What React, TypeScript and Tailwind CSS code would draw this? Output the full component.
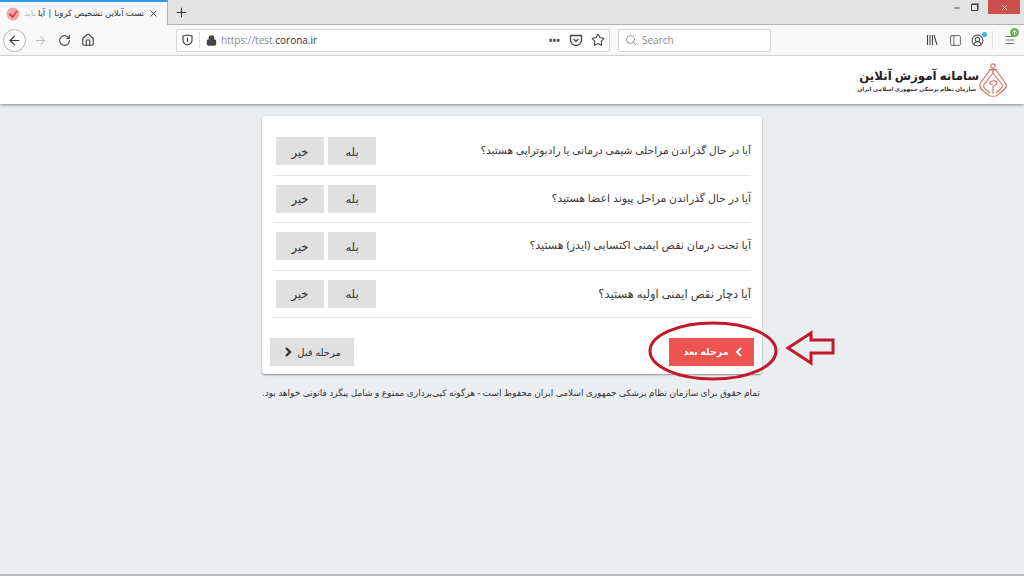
import React from 'react';
import { ArrowLeft, ArrowRight, RotateCw, Home, Lock, Star, Search, Plus, X, Minus, PanelLeft, CircleUserRound, Menu, ArrowUp } from 'lucide-react';

const questions = [
  { text: 'آیا در حال گذراندن مراحلی شیمی درمانی یا رادیوتراپی هستید؟', size: 'text-[10.6px]' },
  { text: 'آیا در حال گذراندن مراحل پیوند اعضا هستید؟', size: 'text-[10.9px]' },
  { text: 'آیا تحت درمان نقص ایمنی اکتسابی (ایدز) هستید؟', size: 'text-[11.1px]' },
  { text: 'آیا دچار نقص ایمنی اولیه هستید؟', size: 'text-[11.5px]' },
];

const Logo = () => (
  <svg width="28" height="34" viewBox="0 0 28 34" fill="none" stroke="#d4786a" strokeWidth="1.2">
    <path d="M11 7 L1.5 20 C0 23 1.5 26 4.5 28 L10 32.5 C12 33.5 16 33.5 18 32.5 L23.5 28 C26.5 26 28 23 26.5 20 L17 7 Z" />
    <path d="M14 10 L5 21.5 C4 23.5 5 25 7 26.5 L11 30 M14 10 L23 21.5 C24 23.5 23 25 21 26.5 L17 30" />
    <circle cx="14" cy="3" r="2.2" />
    <path d="M10 6.5 H18 M14 5 V10 M14 31 V24 C14 22 18 23 18 20 C18 17.5 13 17 11 19.5 C10 21 13 21.5 14 21" />
  </svg>
);

const Question = ({ text, size }: { text: string; size: string }) => (
  <div className="flex items-center justify-between border-b border-[#e4e4e4] h-[47.5px] pl-[3px]">
    <p className={`${size} text-[#3a3a3a] -mt-[1px]`}>{text}</p>
    <div className="flex gap-[4px]">
      <button className="w-[48px] h-[28px] bg-[#e0e0e0] text-[11.5px] text-[#333]">بله</button>
      <button className="w-[48px] h-[28px] bg-[#e0e0e0] text-[11.5px] text-[#333]">خیر</button>
    </div>
  </div>
);

export default function App() {
  return (
    <div className="w-[1024px] h-[576px] overflow-hidden flex flex-col bg-[#ebeef1] relative font-['Noto_Sans','DejaVu_Sans',sans-serif]">
      {/* tab strip */}
      <div className="h-[25px] flex bg-[#e3e3e3] border-b border-[#b4b4b4]">
        <div className="w-[168px] h-[25px] bg-[#f9f9fa] border-t-2 border-[#2f9be8] border-r border-r-[#b4b4b4] flex items-center pl-[6px] pr-[8px] justify-between">
          <svg width="14" height="14" viewBox="0 0 14 14">
            <circle cx="7" cy="7" r="6.5" fill="#f0a5a5" />
            <path d="M3.5 7 L6.5 10 L11 4" stroke="#d9454b" strokeWidth="2" fill="none" />
          </svg>
          <span dir="rtl" className="text-[8.5px] text-[#333] whitespace-nowrap">تست آنلاین تشخیص کرونا | آیا <span className="text-[#bbb]">باید</span></span>
          <X size={11} strokeWidth={2} className="text-[#333]" />
        </div>
        <div className="w-[26px] flex items-center justify-center">
          <Plus size={15} strokeWidth={1.6} className="text-[#333]" />
        </div>
        <div className="flex-1" />
        <div className="flex items-start">
          <div className="w-[19px] h-[15px] flex items-center justify-center"><Minus size={8} strokeWidth={2.5} className="text-[#444]" /></div>
          <div className="w-[17px] h-[15px] mr-[5px] flex items-center justify-center"><div className="w-[7px] h-[7px] border border-[#444] shadow-[1px_-1px_0_#888]" /></div>
          <div className="w-[32px] h-[14px] mr-[4px] bg-[#cb4f4d] flex items-center justify-center"><X size={9} strokeWidth={2} className="text-white" /></div>
        </div>
      </div>
      {/* toolbar */}
      <div className="h-[31px] flex items-center bg-[#f9f9fa] border-b border-[#e6e6e6] pl-[3px]">
        <div className="w-[23px] h-[23px] rounded-full border border-[#b5b5b5] bg-white flex items-center justify-center">
          <ArrowLeft size={15} strokeWidth={1.8} className="text-[#333]" />
        </div>
        <ArrowRight size={15} strokeWidth={1.6} className="text-[#b5b5b5] ml-[7px]" />
        <RotateCw size={13} strokeWidth={2} className="text-[#444] ml-[10px]" />
        <Home size={14} strokeWidth={2} className="text-[#444] ml-[10px]" />
        <div className="ml-[81px] w-[434px] h-[23px] bg-white border border-[#d6d6d6] rounded-[2px] flex items-center pl-[5px] pr-[4px]">
          <svg width="11" height="12" viewBox="0 0 11 12" fill="none" stroke="#444" strokeWidth="1.2">
            <path d="M1 2 L5.5 1 L10 2 V6 C10 9 7.5 10.5 5.5 11 C3.5 10.5 1 9 1 6 Z" />
            <path d="M5.5 3.5 V8" />
          </svg>
          <div className="w-px h-[16px] bg-[#ddd] mx-[6px]" />
          <Lock size={11} strokeWidth={2.5} className="text-[#444]" fill="#444" />
          <span className="ml-[4px] text-[10px] text-[#8a8a8a] font-['Open_Sans',sans-serif]">https://test.<span className="text-[#333]">corona.ir</span></span>
          <div className="flex-1" />
          <span className="text-[#555] text-[10px] font-bold">•••</span>
          <svg width="14" height="13" viewBox="0 0 14 13" fill="none" stroke="#444" strokeWidth="1.3" className="ml-[9px]">
            <path d="M1.5 1.5 H12.5 V6 C12.5 9 10 11.5 7 11.5 C4 11.5 1.5 9 1.5 6 Z" />
            <path d="M4.5 5 L7 7.5 L9.5 5" />
          </svg>
          <Star size={14} strokeWidth={1.8} className="text-[#444] ml-[8px]" />
        </div>
        <div className="ml-[8px] w-[153px] h-[23px] bg-white border border-[#d6d6d6] rounded-[2px] flex items-center pl-[6px]">
          <Search size={12} strokeWidth={1.6} className="text-[#777]" />
          <span className="ml-[5px] text-[10px] text-[#8a8a8a] font-['Open_Sans',sans-serif]">Search</span>
        </div>
        <div className="flex-1" />
        <div className="flex items-center text-[#555]">
          <svg width="12" height="12" viewBox="0 0 12 12" stroke="#444" strokeWidth="1.1" fill="none">
            <path d="M1.5 1 V11 M4 1 V11 M6.5 1 V11 M8 1 L11 11" />
          </svg>
          <PanelLeft size={13} strokeWidth={1.6} className="ml-[11px]" />
          <div className="relative ml-[9px]">
            <CircleUserRound size={13} strokeWidth={2} />
            <span className="absolute -top-[2px] -right-[3px] w-[5px] h-[5px] rounded-full bg-[#3fa9f5]" />
          </div>
          <div className="w-px h-[18px] bg-[#e0e0e0] ml-[8px]" />
          <div className="relative ml-[11px] mr-[8px]">
            <Menu size={12} strokeWidth={1.6} />
            <span className="absolute -top-[6px] -right-[3px] w-[9px] h-[9px] rounded-full bg-[#6fb552] flex items-center justify-center">
              <ArrowUp size={7} strokeWidth={3} className="text-white" />
            </span>
          </div>
        </div>
      </div>
      {/* site header */}
      <div className="h-[48px] bg-white shadow-[0_1px_3px_rgba(0,0,0,0.45)] flex items-center justify-start" dir="rtl">
        <div className="mr-[17px] flex"><Logo /></div>
        <div className="flex flex-col">
          <span className="text-[11.8px] leading-[18px] font-bold text-[#222]">سامانه آموزش آنلاین</span>
          <span className="text-[5.5px] leading-[10px] font-bold text-[#333] pr-[3px]">سازمان نظام پزشکی جمهوری اسلامی ایران</span>
        </div>
      </div>
      {/* card */}
      <div className="flex-1 flex flex-col items-center pt-[12px]" dir="rtl">
        <div className="w-[500px] h-[258px] bg-white rounded-[3px] shadow-[0_1px_2px_rgba(0,0,0,0.4)] pt-[12px]">
          <div className="mx-[11px]">
            {questions.map(q => <Question key={q.text} text={q.text} size={q.size} />)}
          </div>
          <div className="flex justify-between items-center pr-[8px] pl-[8px] mt-[20px]">
            <button className="w-[85px] h-[28px] bg-[#ef5350] text-white text-[9.5px] font-bold flex items-center justify-center gap-[5px] pl-[4px]">
              <svg width="10" height="12" viewBox="0 0 10 12" fill="none" stroke="currentColor" strokeWidth="2">
                <path d="M7 2 L3 6 L7 10" />
              </svg>
              مرحله بعد
            </button>
            <button className="w-[84px] h-[28px] bg-[#e0e0e0] text-[#333] text-[10px] flex items-center justify-center gap-[4px]">
              مرحله قبل
              <svg width="10" height="12" viewBox="0 0 10 12" fill="none" stroke="currentColor" strokeWidth="2.4">
                <path d="M3 2 L7 6 L3 10" />
              </svg>
            </button>
          </div>
        </div>
        <p className="w-[500px] pr-[2px] mt-[12px] text-[9px] text-[#333] whitespace-nowrap">تمام حقوق برای سازمان نظام پزشکی جمهوری اسلامی ایران محفوظ است - هرگونه کپی‌برداری ممنوع و شامل پیگرد قانونی خواهد بود.</p>
      </div>
      <div className="h-[2px] bg-[#b8b8b8]" />
      {/* annotation drawn over the screenshot */}
      <svg className="absolute left-[640px] top-[315px]" width="200" height="75" viewBox="0 0 200 75" fill="none" stroke="#c3182a" strokeWidth="3">
        <ellipse cx="73" cy="36" rx="63" ry="28" />
        <path d="M148 33 L171 18 V25 H193 V38 H171 V48 Z" />
      </svg>
    </div>
  );
}
